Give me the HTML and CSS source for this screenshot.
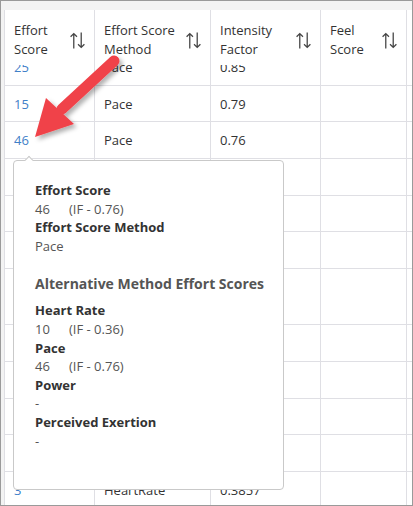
FILE: index.html
```html
<!DOCTYPE html>
<html>
<head>
<meta charset="utf-8">
<link rel="stylesheet" href="styles.css">
</head>
<body>
<div class="frame">
  <div class="table">
    <div class="thead">
      <div class="th"><span class="th-label">Effort<br>Score</span><svg class="sort" viewBox="0 0 16 16"><path d="M4.5 15.5V1.5M1.5 4.5L4.5 1.5L7.5 4.5M11.5 0.5V14.5M8.5 11.5L11.5 14.5L14.5 11.5"/></svg></div>
      <div class="th"><span class="th-label">Effort Score<br>Method</span><svg class="sort" viewBox="0 0 16 16"><path d="M4.5 15.5V1.5M1.5 4.5L4.5 1.5L7.5 4.5M11.5 0.5V14.5M8.5 11.5L11.5 14.5L14.5 11.5"/></svg></div>
      <div class="th"><span class="th-label">Intensity<br>Factor</span><svg class="sort" viewBox="0 0 16 16"><path d="M4.5 15.5V1.5M1.5 4.5L4.5 1.5L7.5 4.5M11.5 0.5V14.5M8.5 11.5L11.5 14.5L14.5 11.5"/></svg></div>
      <div class="th"><span class="th-label">Feel<br>Score</span><svg class="sort" viewBox="0 0 16 16"><path d="M4.5 15.5V1.5M1.5 4.5L4.5 1.5L7.5 4.5M11.5 0.5V14.5M8.5 11.5L11.5 14.5L14.5 11.5"/></svg></div>
    </div>
    <div class="viewport">
      <div class="rows">
        <div class="tr"><div class="td num">25</div><div class="td">Pace</div><div class="td">0.85</div><div class="td"></div></div>
        <div class="tr"><div class="td num">15</div><div class="td">Pace</div><div class="td">0.79</div><div class="td"></div></div>
        <div class="tr"><div class="td num">46</div><div class="td">Pace</div><div class="td">0.76</div><div class="td"></div></div>
        <div class="tr"><div class="td num">38</div><div class="td">Pace</div><div class="td">0.72</div><div class="td"></div></div>
        <div class="tr"><div class="td num">12</div><div class="td">Pace</div><div class="td">0.70</div><div class="td"></div></div>
        <div class="tr"><div class="td num">27</div><div class="td">Pace</div><div class="td">0.80</div><div class="td"></div></div>
        <div class="tr tall"><div class="td num">20</div><div class="td">Pace</div><div class="td">0.68</div><div class="td"></div></div>
        <div class="tr"><div class="td num">9</div><div class="td">Pace</div><div class="td">0.55</div><div class="td"></div></div>
        <div class="tr"><div class="td num">31</div><div class="td">Pace</div><div class="td">0.81</div><div class="td"></div></div>
        <div class="tr"><div class="td num">17</div><div class="td">Pace</div><div class="td">0.74</div><div class="td"></div></div>
        <div class="tr"><div class="td num">22</div><div class="td">Pace</div><div class="td">0.77</div><div class="td"></div></div>
        <div class="tr"><div class="td num">3</div><div class="td">HeartRate</div><div class="td">0.3857</div><div class="td"></div></div>
      </div>
    </div>
  </div>

  <div class="tooltip">
    <span class="notch"></span>
    <div class="tip-label">Effort Score</div>
    <div class="tip-value"><span class="score">46</span>(IF - 0.76)</div>
    <div class="tip-label">Effort Score Method</div>
    <div class="tip-value">Pace</div>
    <div class="tip-heading">Alternative Method Effort Scores</div>
    <div class="tip-label">Heart Rate</div>
    <div class="tip-value"><span class="score">10</span>(IF - 0.36)</div>
    <div class="tip-label">Pace</div>
    <div class="tip-value"><span class="score">46</span>(IF - 0.76)</div>
    <div class="tip-label">Power</div>
    <div class="tip-value">-</div>
    <div class="tip-label">Perceived Exertion</div>
    <div class="tip-value">-</div>
  </div>

  <svg class="callout" viewBox="0 0 140 160" width="140" height="160">
    <defs>
      <filter id="sh" x="-20%" y="-20%" width="150%" height="150%">
        <feDropShadow dx="3" dy="3" stdDeviation="2" flood-color="#000" flood-opacity="0.3"/>
      </filter>
    </defs>
    <g filter="url(#sh)">
      <line x1="114" y1="61" x2="62" y2="109" stroke="#f0424a" stroke-width="11" stroke-linecap="round"/>
      <polygon points="35,137 46,98 74,124" fill="#f0424a"/>
    </g>
  </svg>
</div>
</body>
</html>
```

FILE: styles.css
```css
* { box-sizing: border-box; }

html, body {
  margin: 0;
  padding: 0;
}

body {
  font-family: "Open Sans", "Liberation Sans", sans-serif;
  font-size: 13px;
  color: #333;
}

.frame {
  position: relative;
  width: 413px;
  height: 506px;
  border: 1px solid #9a9a9a;
  background: #f3f3f3;
  padding: 9px 0 0 3px;
  overflow: hidden;
}

.table {
  background: #fff;
  height: 100%;
  display: flex;
  flex-direction: column;
}

.thead,
.tr {
  display: grid;
  grid-template-columns: 90px 116px 110px 86px 1fr;
}

.thead {
  height: 55px;
  background: #fff;
}

.th {
  border-left: 1px solid #dfdfe4;
  padding: 11px 8px 0 9px;
  display: flex;
  justify-content: space-between;
  align-items: flex-start;
}

.th-label {
  line-height: 19px;
  color: #333;
}

.sort {
  width: 17px;
  height: 17px;
  margin-top: 11px;
  flex: none;
  fill: none;
  stroke: #444;
  stroke-width: 1.2;
}

.viewport {
  flex: 1;
  overflow: hidden;
}

.rows {
  margin-top: -16px;
}

.tr {
  height: 36.7px;
  border-bottom: 1px solid #dfdfe4;
  flex: none;
}

.tr.tall {
  height: 56px;
}

.td {
  border-left: 1px solid #dfdfe4;
  padding: 0 8px 0 9px;
  display: flex;
  align-items: center;
  color: #333;
}

.td.num {
  color: #3f80c8;
}

.thead::after,
.tr::after {
  content: "";
  border-left: 1px solid #dfdfe4;
}

.tooltip {
  position: absolute;
  left: 12px;
  top: 159px;
  width: 271px;
  height: 330px;
  background: #fff;
  border: 1px solid #c9c9c9;
  border-radius: 4px;
  padding: 20px 20px 0 21px;
  line-height: 18.6px;
}

.notch {
  position: absolute;
  left: 12px;
  top: -4px;
  width: 6px;
  height: 6px;
  background: #fff;
  border-top: 1px solid #c9c9c9;
  border-left: 1px solid #c9c9c9;
  transform: rotate(45deg);
}

.tip-label {
  font-weight: 700;
  color: #333;
}

.tip-value {
  color: #555;
}

.score {
  display: inline-block;
  width: 34px;
}

.tip-heading {
  font-size: 14px;
  font-weight: 700;
  color: #555;
  line-height: 20px;
  white-space: nowrap;
  margin: 19px 0 7px;
}

.callout {
  position: absolute;
  left: -1px;
  top: -1px;
}
```
